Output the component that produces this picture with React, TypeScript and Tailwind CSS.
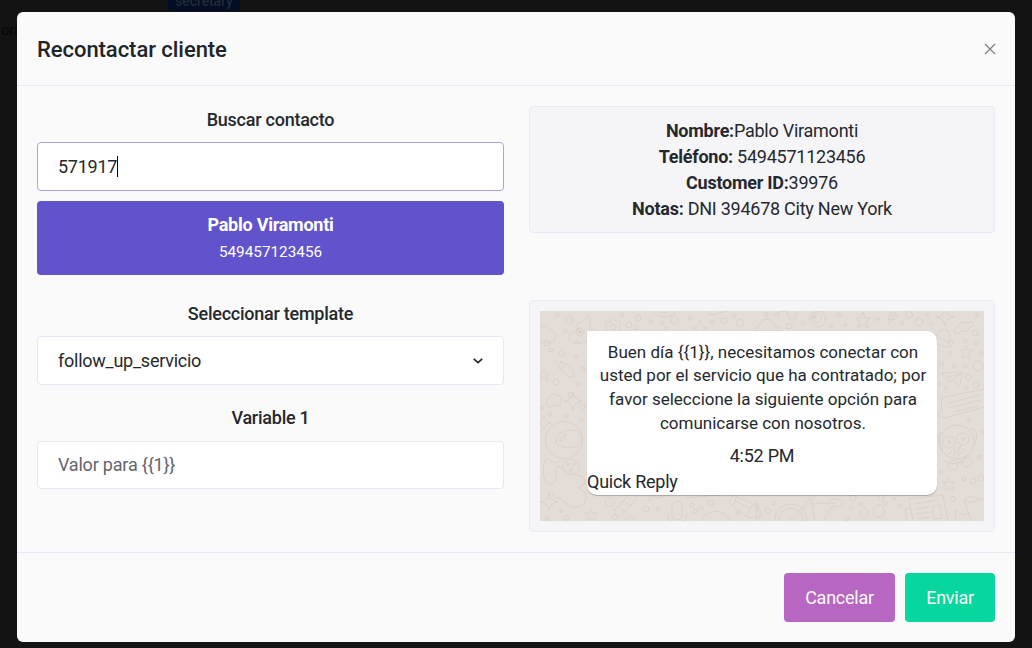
import { ReactNode } from "react";

const STAR = "M0 -7 L2 -2 L7 -2 L3 1.5 L5 7 L0 4 L-5 7 L-3 1.5 L-7 -2 L-2 -2 Z";
const SPARK = "M0 -9 Q1 -1 9 0 Q1 1 0 9 Q-1 1 -9 0 Q-1 -1 0 -9 Z";

const dots = [
  [17, 4, 2], [29, 9, 4], [25, 20, 2], [7, 32, 3], [37, 31, 1.5], [11, 39, 2], [22, 42, 3],
  [36, 46, 1.5], [43, 58, 2], [16, 71, 3], [38, 73, 2], [31, 84, 3], [42, 96, 3], [2, 97, 2],
  [10, 103, 2], [26, 105, 2], [41, 109, 2], [21, 200, 1.5], [26, 207, 2.5], [7, 208, 2],
  [82, 4, 2], [98, 7, 3], [89, 14, 3], [111, 11, 2], [96, 17, 2], [122, 12, 2], [126, 17, 2],
  [134, 9, 4], [150, 7, 2], [172, 11, 2], [184, 10, 3], [194, 5, 2], [200, 12, 4], [226, 3, 2],
  [237, 4, 2], [249, 15, 3], [263, 12, 2], [291, 15, 1.5], [299, 4, 2], [305, 14, 1.5],
  [338, 8, 1.5], [369, 4, 3.5], [362, 12, 2], [379, 11, 4], [387, 4, 1.5], [391, 13, 2],
  [437, 4, 1.5], [435, 22, 3], [425, 30, 2], [436, 32, 2], [441, 42, 2], [410, 42, 2],
  [402, 53, 2], [414, 55, 2], [425, 55, 2], [438, 55, 5], [428, 66, 3], [399, 73, 2],
  [406, 77, 2], [426, 77, 2], [436, 74, 3], [429, 109, 1.5], [442, 121, 2], [439, 146, 2],
  [401, 161, 1.5], [424, 168, 2], [433, 170, 3], [441, 167, 3], [413, 188, 2.5],
  [70, 191, 4.5], [75, 206, 2.5], [106, 198, 3], [118, 198, 2], [110, 188, 2], [152, 194, 2],
  [155, 200, 2], [161, 197, 2], [171, 192, 3], [198, 202, 1.5], [228, 200, 3], [234, 192, 2],
  [307, 208, 2], [311, 197, 2], [321, 193, 2], [345, 192, 2], [360, 195, 2], [313, 187, 3],
  [341, 187, 3], [354, 188, 1.5],
];

const stars = [
  [323, 9, 1.1], [426, 41, 0.9], [409, 173, 0.9], [51, 204, 0.9], [90, 209, 0.7], [4, 64, 0.8],
];

const sparks = [
  [160, 17, 0.9], [405, 6, 1], [33, 90, 1], [9, 191, 1], [4, 112, 0.8],
];

const ChatDoodles = () => (
  <svg
    viewBox="0 0 444 210"
    className="absolute inset-0 w-full h-full"
    fill="none"
    stroke="#dad1cb"
    strokeWidth="1"
    strokeLinecap="round"
    strokeLinejoin="round"
    aria-hidden="true"
  >
    {dots.map(([cx, cy, r], i) => (
      <circle key={i} cx={cx} cy={cy} r={r} />
    ))}
    {stars.map(([x, y, s], i) => (
      <path key={i} d={STAR} transform={`translate(${x} ${y}) scale(${s})`} />
    ))}
    {sparks.map(([x, y, s], i) => (
      <path key={i} d={SPARK} transform={`translate(${x} ${y}) scale(${s})`} />
    ))}

    {/* clouds */}
    <path d="M0 16 Q7 12 10 19 Q17 21 15 28 Q12 33 5 31 H0" />
    <path d="M8 95 Q4 91 9 87 Q11 81 18 84 Q25 87 20 92 Q20 97 14 94 Q11 98 8 95 Z" />
    <path d="M416 23 Q412 18 418 16 Q420 9 427 12 Q434 9 433 14 Q428 17 428 20 Q422 19 416 23 Z" />

    {/* swirl character */}
    <path d="M48 5 Q42 13 37 13 Q35 18 39 19 M48 5 Q53 11 49 15 Q56 20 50 24 M37 20 Q26 23 30 30 Q37 36 47 30" />
    <circle cx="40" cy="21" r="4" />
    <circle cx="40" cy="21" r="1.5" fill="#dad1cb" />

    {/* gear */}
    <circle cx="73" cy="16" r="3" />
    <path d="M71 9 H75 L76 11 L79 10 L81 13 L79 15 L81 17 L79 21 L76 20 L75 23 H71 L70 20 L67 21 L65 17 L67 15 L65 13 L67 10 L70 11 Z" />
    <path d="M113 0 Q118 6 124 6 Q131 6 136 0 M118 0 Q124 4 130 0" />
    <path d="M168 0 L170 4 L188 0" />

    {/* planets */}
    <path d="M219 16 Q221 8 227 8 Q234 9 235 16 M219 15 Q212 17 216 20 H238 Q243 17 235 15" />
    <path d="M396 24 Q401 16 408 20 Q412 26 408 33 M396 24 Q410 35 411 29 Q414 29 412 34 Q407 38 397 33" />

    {/* snail and bolt */}
    <path d="M238 2 Q244 -1 247 1 L250 9 Q256 10 256 5 L256 0" />
    <circle cx="278" cy="8" r="8" />
    <circle cx="277" cy="7" r="4.5" />
    <circle cx="275" cy="6" r="1" fill="#dad1cb" />
    <path d="M352 0 L348 9 L354 8 L347 13 L359 5 L353 5 L357 0" />

    {/* glove */}
    <path d="M15 50 L23 60 Q26 67 34 66 Q36 60 30 55 L20 50 L24 57 M17 56 L23 60 M29 59 L33 63" />

    {/* astronaut */}
    <circle cx="24" cy="129" r="18.5" />
    <path d="M16 131 Q16 120 29 119 Q40 118 42 129 Q40 137 31 136 Q18 138 16 131 Z" />
    <path d="M20 130 Q20 124 26 123 Q24 130 20 130 Z" />
    <path d="M6 148 Q1 156 5 171 Q15 178 16 165 Q14 160 18 155 L35 164 Q48 165 44 174 L38 177 Q49 180 45 192 Q38 200 28 194 L20 187 Q14 190 13 181 M8 148 Q16 155 23 149" />
    <circle cx="31" cy="156" r="8" />
    <circle cx="28" cy="153" r="1.5" />
    <circle cx="34" cy="153" r="1.5" />
    <circle cx="31" cy="159" r="1.5" />

    {/* paper plane */}
    <path d="M401 62 L422 61 L420 75 L412 69 L409 72 L407 67 Z M407 67 L422 62 L412 69" />

    {/* speech note */}
    <path d="M444 78 L401 87 L402 99 L398 105 L404 107 L444 96 M409 92 L440 84 M409 97 L441 89 M414 101 L438 95" />

    {/* monkey */}
    <circle cx="417" cy="131" r="17" />
    <circle cx="409" cy="131" r="6" />
    <circle cx="423" cy="128" r="6" />
    <circle cx="409" cy="131" r="1.5" />
    <circle cx="423" cy="128" r="1.5" />
    <path d="M401 121 Q395 128 402 139 M431 118 Q440 118 435 133 M409 143 L415 136 L414 145 L421 134 L418 145 L425 138 M405 150 Q415 157 427 147" />
    <circle cx="413" cy="154" r="5" />
    <circle cx="427" cy="151" r="5" />

    {/* crayons */}
    <path d="M74 199 L90 183 L98 186 L81 205 Q75 206 74 199 Z M78 196 L85 201 M83 190 L91 195" />
    <path d="M189 191 L193 184 L216 194 L220 206 L208 207 Z M197 185 L193 194 M213 193 L206 206 M195 190 L209 197" />
    <path d="M110 184 Q118 190 126 184 M146 187 L179 184" />

    {/* microphone */}
    <rect x="132" y="190" width="10" height="19" rx="5" />
    <path d="M128 203 Q127 210 132 210 M147 203 Q148 210 143 210" />
    <path d="M161 210 Q163 202 176 200 Q187 201 190 210" />

    {/* bicycle */}
    <circle cx="251" cy="209" r="16" />
    <circle cx="251" cy="209" r="12" />
    <path d="M250 209 L273 185 M253 209 L276 186 M268 185 L272 193 L296 192 M272 193 L275 210 M293 194 L283 210 M290 191 Q291 186 300 189 Q305 191 302 195 Q295 194 290 198" />
    <path d="M216 210 V190 L222 205 Z" />
    <ellipse cx="324" cy="202" rx="4" ry="5" />
    <ellipse cx="339" cy="200" rx="5.5" ry="6.5" />

    {/* newspaper */}
    <path d="M373 210 L369 188 L403 184 L408 210 M370 197 L365 198 L367 210 M375 193 L398 189 M376 198 L389 196 M377 203 L389 201 M378 208 L390 206 M393 195 L400 194 L402 207 L394 208 Z" />

    {/* candle */}
    <path d="M416 210 L415 199 L424 204 L429 202 L424 190 L430 185 L444 189 M424 190 Q432 194 439 188 M429 202 L431 210" />
  </svg>
);

const Label = ({ children }: { children: ReactNode }) => (
  <p className="mb-2.5 h-[26px] text-center font-medium">{children}</p>
);

const details = [
  { label: "Nombre:", value: "Pablo Viramonti" },
  { label: "Teléfono:", value: " 5494571123456" },
  { label: "Customer ID:", value: "39976" },
  { label: "Notas:", value: " DNI 394678 City New York" },
];

const App = () => {
  return (
    <div className="relative h-[648px] w-full overflow-hidden bg-[#131313] pt-3 pl-[17px] pr-[17px] font-['Roboto',sans-serif] text-[18px] leading-[26px] tracking-[-0.25px] text-[#25292e]">
      <span className="absolute left-[168px] top-0 h-[11px] w-[72px] rounded-b bg-[#020d24] text-center text-[14px] leading-[3px] font-medium tracking-[-0.1px] text-[#202b3b]">
        secretary
      </span>
      <span className="absolute left-px top-[17px] text-[15px] text-[#050505]">ora</span>

      <div className="relative flex h-[630px] w-[998px] flex-col rounded-md bg-[#fafafa]">
        <div className="flex h-[74px] shrink-0 items-center justify-between border-b border-[#e9e9f8] px-5">
          <h2 className="pt-0.5 text-[22px] font-medium tracking-[-0.05px] text-[#212529]">
            Recontactar cliente
          </h2>
          <button aria-label="Cerrar" className="-mr-px">
            <svg width="12" height="12" viewBox="0 0 12 12" stroke="#7d7d7e" strokeWidth="1.2" fill="none">
              <path d="M1 1 L11 11 M11 1 L1 11" />
            </svg>
          </button>
        </div>

        <div className="grid grid-cols-[467px_466px] grid-rows-[169px_232px] gap-[25px] px-5 pt-5 pb-5">
          <div className="pt-px">
            <div className="-mb-px">
              <Label>Buscar contacto</Label>
            </div>
            <div className="flex h-[49px] items-center rounded border border-[#aca2e1] bg-white px-5">
              <span>571917</span>
              <span className="h-[21px] w-px bg-black" />
            </div>
            <div className="mt-2.5 h-[74px] rounded bg-[#6153cc] pt-[11px] text-center text-white">
              <p className="font-bold">Pablo Viramonti</p>
              <p className="text-[15.3px] leading-7 tracking-normal">549457123456</p>
            </div>
          </div>

          <div className="h-[127px] rounded border border-[#e9e9f8] bg-[#f5f5f8] pt-[11px] text-center">
            {details.map((item) => (
              <p key={item.label}>
                <strong className="font-bold">{item.label}</strong>
                {item.value}
              </p>
            ))}
          </div>

          <div className="pt-px">
            <div className="-mb-px">
              <Label>Seleccionar template</Label>
            </div>
            <div className="mb-5 flex h-[49px] items-center justify-between rounded border border-[#e5e8f6] bg-white px-5">
              <span>follow_up_servicio</span>
              <svg width="10" height="6" viewBox="0 0 10 6" fill="none" stroke="#212529" strokeWidth="1.6">
                <path d="M0.8 0.8 L5 4.7 L9.2 0.8" />
              </svg>
            </div>
            <Label>Variable 1</Label>
            <input
              className="block h-12 w-full rounded border border-[#e5e8f6] bg-white px-5 pb-0.5 tracking-[-0.2px] outline-none placeholder:text-[#63676b]"
              placeholder="Valor para {{1}}"
            />
          </div>

          <div className="rounded border border-[#e9e9f8] bg-[#f5f5f8] p-2.5">
            <div className="relative h-[210px] bg-[#e4dcd6] px-[47px] pt-5">
              <ChatDoodles />
              <div className="relative h-[164px] rounded-[10px] rounded-tl-none bg-white pt-[9.5px] shadow-[0_1px_1px_rgba(0,0,0,0.25)]">
                <p className="pl-0.5 text-center text-[17px] leading-[23.8px] tracking-normal">
                  Buen día {"{{1}}"}, necesitamos conectar con
                  <br />
                  usted por el servicio que ha contratado; por
                  <br />
                  favor seleccione la siguiente opción para
                  <br />
                  comunicarse con nosotros.
                </p>
                <p className="mt-[7.5px] text-center">4:52 PM</p>
                <p>Quick Reply</p>
              </div>
            </div>
          </div>
        </div>

        <div className="flex h-[90px] justify-end gap-2.5 border-t border-[#e5e5f8] px-5 pt-5 text-[#fafafa]">
          <button className="h-[49px] w-[111px] rounded bg-[#b766c1]">Cancelar</button>
          <button className="h-[49px] w-[90px] rounded bg-[#07d79f]">Enviar</button>
        </div>
      </div>
    </div>
  );
};

export default App;
